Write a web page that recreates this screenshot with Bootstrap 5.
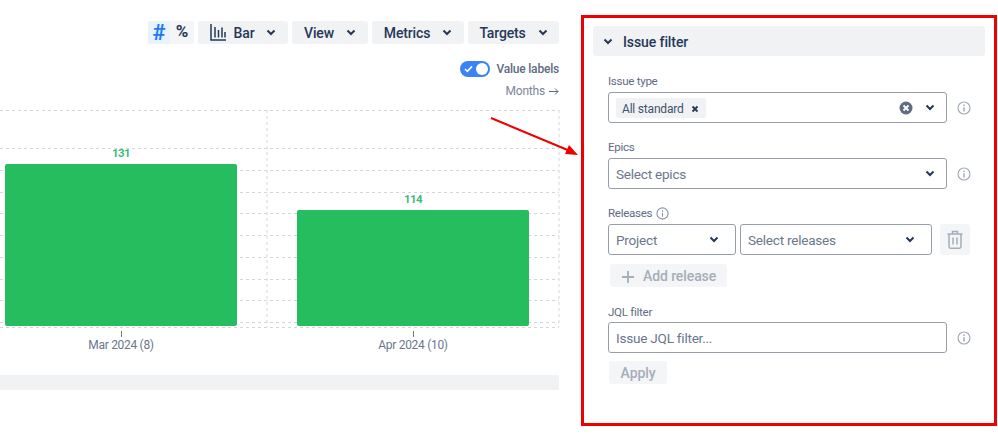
<!DOCTYPE html>
<html lang="en">
<head>
<meta charset="utf-8">
<title>Issue filter</title>
<link rel="stylesheet" href="https://cdn.jsdelivr.net/npm/bootstrap@5.3.0/dist/css/bootstrap.min.css">
<style>
html,body{height:435px;overflow:hidden}
body{font-family:Roboto,"Noto Sans",sans-serif;font-size:13px;color:#172b4d;background:#fff;position:relative}
.stage-left{width:581px;flex:none;padding-top:21px}
.tool-row{padding-right:22px;gap:4px;height:23px}
.tool-btn{height:23px;background:#f1f2f4;border:0;border-radius:3px;color:#253858;font-size:14px;letter-spacing:-.15px;font-weight:500;padding:0;line-height:23px}
.tool-btn svg{flex:none}
.tool-btn span{padding-top:2px}
.w-bar{width:90px}.w-view{width:76px}.w-metrics{width:92px}.w-targets{width:91px}
.seg{width:46px;background:#f4f5f7;border-radius:3px;height:23px}
.seg-on{width:22px;background:#e9f2ff;color:#1d7afc;font-size:22px;font-weight:700;line-height:23px;text-align:center;border-radius:3px 0 0 3px}
.seg-off{width:24px;color:#253858;font-size:17px;font-weight:700;line-height:21px;text-align:center}
.toggle-row{padding-right:22px;margin-top:17px;height:16px;gap:6px;font-size:12px;letter-spacing:-.2px;color:#5e6c84;font-weight:500}
.switch-pill{width:30px;height:16px;border-radius:8px;background:#3b82f6;position:relative;flex:none}
.switch-pill i{position:absolute;right:2px;top:2px;width:12px;height:12px;border-radius:50%;background:#fff}
.switch-pill svg{position:absolute;left:4px;top:4px}
.months-row{padding-right:22px;margin-top:5px;font-size:12px;letter-spacing:-.2px;color:#7a869a;gap:4px;height:18px;line-height:18px}
.chart-svg{display:block;margin-top:5px}
.chart-svg text{font-family:Roboto,"Noto Sans",sans-serif}
.lower-strip{width:559px;height:15px;background:#f1f2f4;margin-top:17px}
.filter-box{width:416px;height:411px;margin-top:15px;border:3px solid #ee0000;padding:8px 9px 0 9px;flex:none}
.filter-head{height:30px;background:#f1f2f4;border-radius:3px;padding-left:10px;gap:10px;font-size:14px;letter-spacing:-.1px;font-weight:500;color:#253858}
.filter-head span{padding-top:2px}
.filter-body{padding:0 0 0 15px}
.lbl{font-size:11.600px;letter-spacing:-.3px;color:#5e6c84;line-height:16px;margin:0;height:16px}
.fld{height:31px;border:1px solid #979ea8;border-radius:3px;background:#fff;font-size:13.600px;letter-spacing:-.25px;color:#6b778c;padding:0 7px;min-width:0}
.fld>span{padding-top:2px}
.fld-wide{width:339px}
.gap-icon{width:24px;flex:none;text-align:right;line-height:0}
.chip{background:#f1f2f4;border-radius:2px;height:20px;font-size:12px;letter-spacing:-.2px;color:#42526e;padding:1px 7px 0 6px;gap:7px;margin-left:0}
.btn-dim{background:#f4f5f7;border:0;border-radius:3px;color:#a5adba;font-size:14px;letter-spacing:-.1px;font-weight:500;height:23px;padding:2px 0 0}
.trash-btn{width:30px;height:31px;background:#f4f5f7;border-radius:3px;margin-left:8px}
.arrow-over{position:absolute;left:485px;top:112px;pointer-events:none}
</style>
</head>
<body>
<div class="d-flex">
  <div class="stage-left">
    <div class="d-flex justify-content-end tool-row">
      <div class="d-flex seg"><div class="seg-on">#</div><div class="seg-off">%</div></div>
      <button class="tool-btn w-bar d-flex align-items-center justify-content-center gap-2" type="button">
        <svg width="16" height="17" viewBox="0 0 16 17" fill="none" stroke="#253858" stroke-width="1.500"><path d="M1 0v16H16M5 3V13.500M8.500 6V13.500M12 3.500V13.500M15 8V13.500"/></svg>
        <span>Bar</span>
        <svg class="ms-1" width="10" height="7" viewBox="0 0 10 7" fill="none" stroke="#253858" stroke-width="2"><path d="M1.500 1.500 5 5l3.500-3.500"/></svg>
      </button>
      <button class="tool-btn w-view d-flex align-items-center justify-content-center gap-2" type="button"><span>View</span><svg class="ms-1" width="10" height="7" viewBox="0 0 10 7" fill="none" stroke="#253858" stroke-width="2"><path d="M1.500 1.500 5 5l3.500-3.500"/></svg></button>
      <button class="tool-btn w-metrics d-flex align-items-center justify-content-center gap-2" type="button"><span>Metrics</span><svg class="ms-1" width="10" height="7" viewBox="0 0 10 7" fill="none" stroke="#253858" stroke-width="2"><path d="M1.500 1.500 5 5l3.500-3.500"/></svg></button>
      <button class="tool-btn w-targets d-flex align-items-center justify-content-center gap-2" type="button"><span>Targets</span><svg class="ms-1" width="10" height="7" viewBox="0 0 10 7" fill="none" stroke="#253858" stroke-width="2"><path d="M1.500 1.500 5 5l3.500-3.500"/></svg></button>
    </div>
    <div class="d-flex justify-content-end align-items-center toggle-row">
      <div class="switch-pill"><svg width="9" height="8" viewBox="0 0 9 8" fill="none" stroke="#fff" stroke-width="1.600"><path d="M1 4l2.400 2.400L8 1.400"/></svg><i></i></div>
      <span>Value labels</span>
    </div>
    <div class="d-flex justify-content-end align-items-center months-row">
      <span>Months</span>
      <svg width="10" height="9" viewBox="0 0 10 9" fill="none" stroke="#5e6c84" stroke-width="1"><path d="M0 4.500h9M6 1.500l3 3-3 3"/></svg>
    </div>
    <svg class="chart-svg" width="560" height="253" viewBox="0 105 560 253">
      <g stroke="#d3d6da" stroke-width="1" stroke-dasharray="3 3" fill="none">
        <path d="M0 110.500H559M0 148.500H559M0 170.500H559M0 192.500H559M0 213.500H559M0 235.500H559M0 257.500H559M0 279.500H559M0 300.500H559M0 322.500H559M0 327.500H559"/>
        <path d="M267 110V327M559 110V327"/>
      </g>
      <rect x="5" y="164" width="232" height="162" rx="2" fill="#26bd5e"/>
      <rect x="297" y="210" width="232" height="116" rx="2" fill="#26bd5e"/>
      <text x="121" y="157" text-anchor="middle" font-size="11.500" letter-spacing="-.6" font-weight="700" fill="#3fb978">131</text>
      <text x="413" y="203" text-anchor="middle" font-size="11.500" letter-spacing="-.6" font-weight="700" fill="#3fb978">114</text>
      <path d="M121.500 331V337M413.500 331V337" stroke="#6b778c"/>
      <text x="121" y="349" text-anchor="middle" font-size="12" letter-spacing="-.3" fill="#6b778c">Mar 2024 (8)</text>
      <text x="413" y="349" text-anchor="middle" font-size="12" letter-spacing="-.3" fill="#6b778c">Apr 2024 (10)</text>
    </svg>
    <div class="lower-strip"></div>
  </div>
  <div class="filter-box">
    <div class="filter-head d-flex align-items-center">
      <svg width="10" height="7" viewBox="0 0 10 7" fill="none" stroke="#253858" stroke-width="2"><path d="M1.500 1.500 5 5l3.500-3.500"/></svg>
      <span>Issue filter</span>
    </div>
    <div class="filter-body">
      <p class="lbl" style="margin-top:17px">Issue type</p>
      <div class="d-flex align-items-center" style="margin-top:3px">
        <div class="fld fld-wide d-flex align-items-center">
          <span class="chip d-flex align-items-center">All standard <svg width="8" height="8" viewBox="0 0 8 8" stroke="#253858" stroke-width="1.800"><path d="M1.500 1.500l5 5M6.500 1.500l-5 5"/></svg></span>
          <svg class="ms-auto" width="14" height="14" viewBox="0 0 14 14"><circle cx="7" cy="7" r="6.500" fill="#5e6c84"/><path d="M4.500 4.500l5 5M9.500 4.500l-5 5" stroke="#fff" stroke-width="1.800"/></svg>
          <svg width="10" height="7" viewBox="0 0 10 7" fill="none" stroke="#253858" stroke-width="2" style="margin:0 4px 0 12px"><path d="M1.500 1.500 5 5l3.500-3.500"/></svg>
        </div>
        <div class="gap-icon"><svg width="14" height="14" viewBox="0 0 14 14" fill="none" stroke="#a5adba" stroke-width="1.200"><circle cx="7" cy="7" r="6"/><path d="M7 6.200V10.500M7 3.500v1.500" stroke="#8993a4"/></svg></div>
      </div>
      <p class="lbl" style="margin-top:16px">Epics</p>
      <div class="d-flex align-items-center" style="margin-top:3px">
        <div class="fld fld-wide d-flex align-items-center justify-content-between">
          <span>Select epics</span>
          <svg width="10" height="7" viewBox="0 0 10 7" fill="none" stroke="#253858" stroke-width="2" style="margin-right:4px"><path d="M1.500 1.500 5 5l3.500-3.500"/></svg>
        </div>
        <div class="gap-icon"><svg width="14" height="14" viewBox="0 0 14 14" fill="none" stroke="#a5adba" stroke-width="1.200"><circle cx="7" cy="7" r="6"/><path d="M7 6.200V10.500M7 3.500v1.500" stroke="#8993a4"/></svg></div>
      </div>
      <p class="lbl d-flex align-items-center gap-1" style="margin-top:16px">Releases <svg width="13" height="13" viewBox="0 0 14 14" fill="none" stroke="#8993a4" stroke-width="1.200"><circle cx="7" cy="7" r="6"/><path d="M7 6.200V10.500M7 3.500v1.500"/></svg></p>
      <div class="d-flex align-items-center" style="margin-top:3px">
        <div class="fld d-flex align-items-center justify-content-between" style="width:128px"><span>Project</span><svg width="10" height="7" viewBox="0 0 10 7" fill="none" stroke="#253858" stroke-width="2" style="margin-right:9px"><path d="M1.500 1.500 5 5l3.500-3.500"/></svg></div>
        <div class="fld d-flex align-items-center justify-content-between" style="width:192px;margin-left:4px"><span>Select releases</span><svg width="10" height="7" viewBox="0 0 10 7" fill="none" stroke="#253858" stroke-width="2" style="margin-right:9px"><path d="M1.500 1.500 5 5l3.500-3.500"/></svg></div>
        <div class="trash-btn d-flex align-items-center justify-content-center"><svg width="16" height="19" viewBox="0 0 16 19" fill="none" stroke="#a5adba" stroke-width="1.500"><path d="M.5 4h15M5.500 4V1.500h5V4M2 4v12.500c0 1 .6 1.700 1.500 1.700h9c.9 0 1.500-.7 1.500-1.700V4M6 7.500v7M10 7.500v7"/></svg></div>
      </div>
      <button class="btn-dim d-flex align-items-center" type="button" style="width:117px;margin:9px 0 0 2px;padding-left:12px;gap:9px"><svg width="12" height="12" viewBox="0 0 12 12" stroke="#a5adba" stroke-width="1.800"><path d="M6 0v12M0 6h12"/></svg><span>Add release</span></button>
      <p class="lbl" style="margin-top:17px">JQL filter</p>
      <div class="d-flex align-items-center" style="margin-top:2px">
        <div class="fld fld-wide d-flex align-items-center"><span>Issue JQL filter...</span></div>
        <div class="gap-icon"><svg width="14" height="14" viewBox="0 0 14 14" fill="none" stroke="#a5adba" stroke-width="1.200"><circle cx="7" cy="7" r="6"/><path d="M7 6.200V10.500M7 3.500v1.500" stroke="#8993a4"/></svg></div>
      </div>
      <button class="btn-dim" type="button" style="width:58px;margin:8px 0 0 1px">Apply</button>
    </div>
  </div>
</div>
<svg class="arrow-over" width="100" height="50" viewBox="485 112 100 50"><path d="M491 118 570 151" stroke="#ee0000" stroke-width="2"/><path d="M578 155 565 154 569 145z" fill="#ee0000"/></svg>
<script src="https://cdn.jsdelivr.net/npm/bootstrap@5.3.0/dist/js/bootstrap.bundle.min.js"></script>
</body>
</html>
